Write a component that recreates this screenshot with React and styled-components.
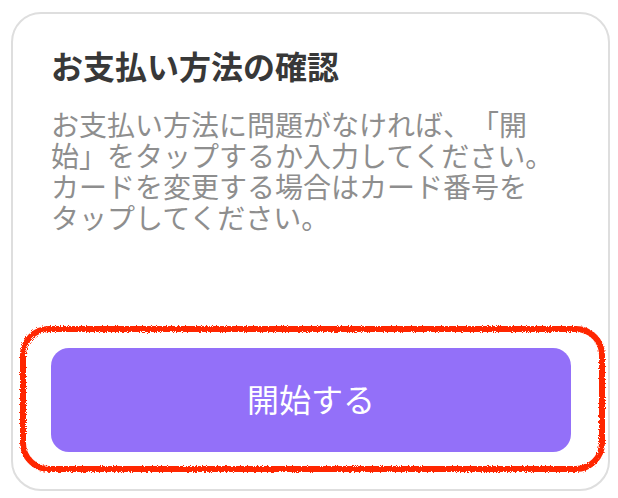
import styled, { createGlobalStyle } from "styled-components";

const GlobalStyle = createGlobalStyle`
  html, body {
    margin: 0;
    padding: 0;
    background: #ffffff;
  }
  body {
    font-family: "Noto Sans CJK JP", "Noto Sans", sans-serif;
    text-spacing-trim: space-all;
  }
`;

const Page = styled.div`
  width: 618px;
  height: 498px;
  padding: 12px 8px 7px 11px;
  box-sizing: border-box;
`;

const Card = styled.div`
  width: 599px;
  height: 479px;
  box-sizing: border-box;
  border: 2px solid #dedede;
  border-radius: 30px;
  padding: 31px 37px 37px 38px;
  display: flex;
  flex-direction: column;
`;

const Title = styled.h2`
  margin: 0;
  font-size: 32px;
  line-height: 40px;
  font-weight: 700;
  color: #383838;
`;

const Body = styled.p`
  margin: 24px 0 0 0;
  font-size: 28px;
  line-height: 31px;
  color: #8e8e8e;
  white-space: nowrap;
  text-spacing-trim: space-all;
`;

const ButtonArea = styled.div`
  position: relative;
  margin-top: auto;
`;

const StartButton = styled.button`
  width: 100%;
  height: 104px;
  border: none;
  border-radius: 18px;
  background: #9370f9;
  color: #ffffff;
  font-family: "Noto Sans CJK JP", "Noto Sans", sans-serif;
  font-size: 32px;
  font-weight: 400;
  padding: 0 0 4px 0;
  display: flex;
  align-items: center;
  justify-content: center;
  cursor: pointer;
`;

const Marker = styled.svg`
  position: absolute;
  left: -31px;
  top: -22px;
  width: 585px;
  height: 146px;
  pointer-events: none;
  overflow: visible;
`;

const HighlightRing = () => (
  <Marker viewBox="0 0 585 146">
    <defs>
      <filter id="rough" x="-5%" y="-10%" width="110%" height="120%">
        <feTurbulence type="fractalNoise" baseFrequency="1.2" numOctaves="2" seed="3" />
        <feDisplacementMap in="SourceGraphic" scale="4" />
      </filter>
    </defs>
    <rect
      x="3"
      y="3"
      width="579"
      height="140"
      rx="26"
      fill="none"
      stroke="#ff2600"
      strokeWidth="6"
      filter="url(#rough)"
    />
  </Marker>
);

export default function App() {
  return (
    <>
      <GlobalStyle />
      <Page>
        <Card>
          <Title>お支払い方法の確認</Title>
          <Body>
            お支払い方法に問題がなければ、「開
            <br />
            始」をタップするか入力してください。
            <br />
            カードを変更する場合はカード番号を
            <br />
            タップしてください。
          </Body>
          <ButtonArea>
            <HighlightRing />
            <StartButton>開始する</StartButton>
          </ButtonArea>
        </Card>
      </Page>
    </>
  );
}
